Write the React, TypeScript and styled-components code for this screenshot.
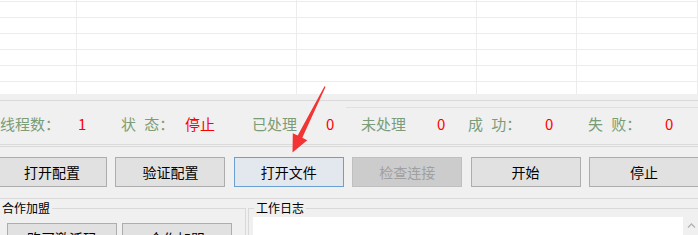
import React from 'react'
import styled, { createGlobalStyle } from 'styled-components'

const FONT = `'Noto Sans CJK SC', 'Microsoft YaHei', sans-serif`

const GlobalStyle = createGlobalStyle`
  html, body {
    margin: 0;
    padding: 0;
    background: #f0f0f0;
  }
  body {
    font-family: ${FONT};
    overflow: hidden;
  }
`

const GRID_COLUMNS = [77, 220, 180, 100, 121]
const GRID_ROWS = 7

const STATS: { text: string; width: number; value?: boolean }[] = [
  { text: '线程数：', width: 78 },
  { text: '1', width: 43, value: true },
  { text: '状 态：', width: 64 },
  { text: '停止', width: 67, value: true },
  { text: '已处理', width: 74 },
  { text: '0', width: 35, value: true },
  { text: '未处理', width: 76 },
  { text: '0', width: 31, value: true },
  { text: '成 功：', width: 77 },
  { text: '0', width: 43, value: true },
  { text: '失 败：', width: 77 },
  { text: '0', width: 30, value: true }
]

const App = () => {
  return (
    <Window>
      <GlobalStyle />
      <Grid>
        <GridBody>
          {Array.from({ length: GRID_ROWS }).map((_, r) => (
            <GridRow key={r}>
              {GRID_COLUMNS.map((w, c) => (
                <GridCell key={c} $w={w} />
              ))}
              <GridCell />
            </GridRow>
          ))}
        </GridBody>
      </Grid>

      <StatusBox>
        <InnerRule />
        <StatsRow>
          {STATS.map((s, i) => (
            <Stat key={i} $w={s.width} $value={s.value}>
              {s.text}
            </Stat>
          ))}
        </StatsRow>
      </StatusBox>

      <ButtonBox>
        <ButtonRow>
          <Button>打开配置</Button>
          <Button>验证配置</Button>
          <Button $focused>打开文件</Button>
          <Button disabled>检查连接</Button>
          <Button>开始</Button>
          <Button>停止</Button>
        </ButtonRow>
      </ButtonBox>

      <Bottom>
        <GroupBox $left>
          <GroupTitle>合作加盟</GroupTitle>
          <GroupActions>
            <Button>购买激活码</Button>
            <Button>合作加盟</Button>
          </GroupActions>
        </GroupBox>
        <GroupBox>
          <GroupTitle>工作日志</GroupTitle>
          <LogBox>
            <LogText />
            <ScrollBar>
              <svg width="17" height="17" viewBox="0 0 17 17">
                <polyline points="5,10.5 8.5,7 12,10.5" fill="none" stroke="#b4b4b4" strokeWidth="1.3" />
              </svg>
            </ScrollBar>
          </LogBox>
        </GroupBox>
      </Bottom>

      <ArrowLayer width="698" height="235" viewBox="0 0 698 235">
        <polygon
          points="324.5,86.2 325.6,86.8 302.3,137.8 307.3,140.3 292.5,152.5 292.8,133.2 297.7,135.6"
          fill="#f23434"
        />
      </ArrowLayer>
    </Window>
  )
}

const Window = styled.div`
  position: relative;
  width: 698px;
  height: 235px;
  overflow: hidden;
  background: #f0f0f0;
  font-family: ${FONT};
`

const Grid = styled.div`
  height: 94px;
  overflow: hidden;
  background: #fff;
`

const GridBody = styled.div`
  margin-top: -14px;
`

const GridRow = styled.div`
  display: flex;
  height: 16px;
`

const GridCell = styled.div<{ $w?: number }>`
  box-sizing: border-box;
  height: 16px;
  border-bottom: 1px solid #ececec;
  border-right: 1px solid #ececec;
  flex: ${(p) => (p.$w ? `0 0 ${p.$w}px` : '1')};
`

const StatusBox = styled.section`
  margin-top: 6px;
  height: 43px;
  border-top: 1px solid #dadada;
  border-bottom: 1px solid #dadada;
`

const InnerRule = styled.div`
  margin: 6px 0 0 346px;
  border-top: 1px solid #e0e0e0;
`

const StatsRow = styled.div`
  display: flex;
  margin-top: 6px;
  height: 20px;
`

const Stat = styled.span<{ $w: number; $value?: boolean }>`
  flex: 0 0 ${(p) => p.$w}px;
  font-size: 15px;
  line-height: 20px;
  white-space: pre;
  word-spacing: 5px;
  color: ${(p) => (p.$value ? '#ff0000' : '#7a9c76')};
`

const ButtonBox = styled.section`
  margin-top: 1px;
  padding: 10px 0 11px;
  border-top: 1px solid #dadada;
  border-bottom: 1px solid #dadada;
`

const ButtonRow = styled.div`
  display: flex;
  justify-content: space-between;
  width: 702px;
  margin-left: -3px;
`

const Button = styled.button<{ $focused?: boolean }>`
  flex: none;
  box-sizing: border-box;
  width: 110px;
  height: 30px;
  padding: 0;
  border: 1px solid ${(p) => (p.$focused ? '#6a9fd2' : '#adadad')};
  border-radius: 0;
  background: ${(p) => (p.$focused ? '#e3e8ee' : '#e1e1e1')};
  color: #000;
  font-family: ${FONT};
  font-size: 14px;
  line-height: 28px;

  &:disabled {
    background: #cccccc;
    border-color: #bfbfbf;
    color: #a0a0a0;
  }
`

const Bottom = styled.div`
  display: flex;
  gap: 2px;
  margin-top: 3px;
`

const GroupBox = styled.fieldset<{ $left?: boolean }>`
  flex: none;
  box-sizing: border-box;
  min-width: 0;
  margin: 0 0 0 ${(p) => (p.$left ? '-6px' : '0')};
  width: ${(p) => (p.$left ? '252px' : '460px')};
  height: 70px;
  padding: ${(p) => (p.$left ? '9px 0 0' : '3px 0 0')};
  border: 1px solid #d9d9d9;
`

const GroupTitle = styled.legend`
  margin-left: 5px;
  padding: 0 2px;
  font-size: 12px;
  line-height: 12px;
  color: #000;
`

const GroupActions = styled.div`
  display: flex;
  gap: 5px;
  margin-left: 12px;
`

const LogBox = styled.div`
  display: flex;
  height: 40px;
  margin-left: 4px;
`

const LogText = styled.div`
  flex: 0 0 430px;
  background: #fff;
`

const ScrollBar = styled.div`
  flex: 0 0 17px;
  background: #f0f0f0;

  svg {
    display: block;
  }
`

const ArrowLayer = styled.svg`
  position: absolute;
  left: 0;
  top: 0;
  pointer-events: none;
`

export default App
